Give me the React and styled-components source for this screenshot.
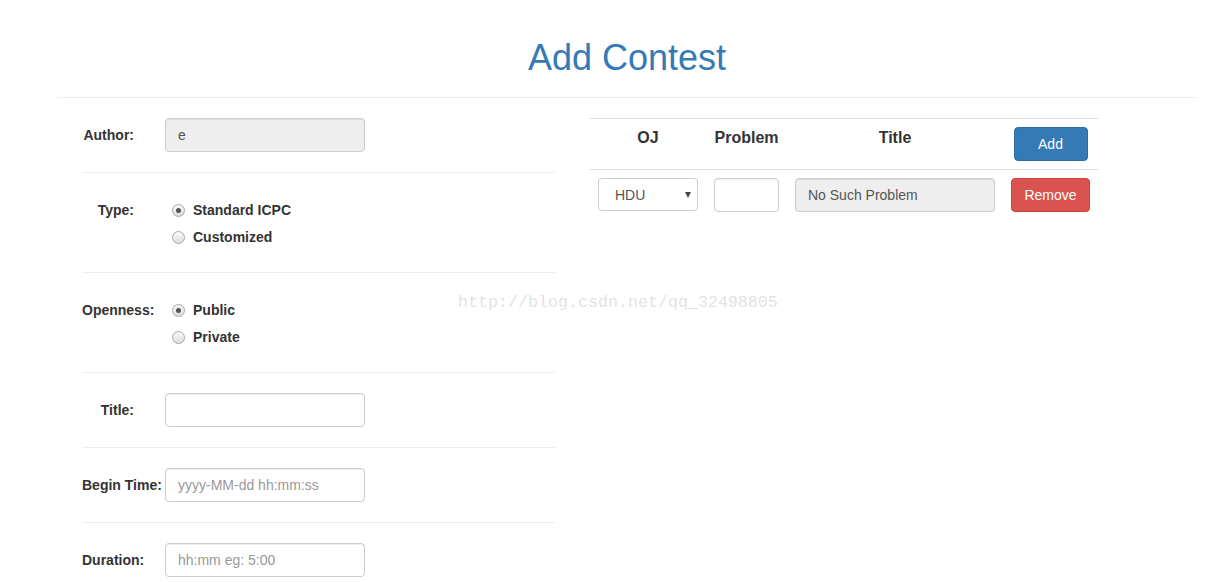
import styled, { createGlobalStyle } from 'styled-components';

const GlobalStyle = createGlobalStyle`
  * {
    box-sizing: border-box;
  }

  body {
    margin: 0;
    background: #fff;
    color: #333;
    font-family: "Liberation Sans", Arial, sans-serif;
    font-size: 14px;
    line-height: 1.42857;
  }
`;

const Page = styled.div`
  position: relative;
  width: 1140px;
  margin-left: 57px;
  padding-top: 38px;
`;

const Heading = styled.h1`
  margin: 0 0 19px;
  font-size: 36px;
  line-height: 40px;
  font-weight: 400;
  color: #337ab7;
  text-align: center;
`;

const Divider = styled.hr`
  margin: 0;
  border: 0;
  border-top: 1px solid #eee;
`;

const Content = styled.div`
  display: flex;
  align-items: flex-start;
`;

const LeftColumn = styled.div`
  width: 473px;
  margin-left: 25px;
`;

const FormRow = styled.div`
  display: flex;
  align-items: flex-start;
  padding: 20px 0;
  border-bottom: ${(p) => (p.$last ? 'none' : '1px solid #eee')};
`;

const Label = styled.label`
  width: 52px;
  flex-shrink: 0;
  margin-right: 31px;
  padding-top: 7px;
  line-height: 20px;
  font-weight: 700;
  text-align: right;
  white-space: nowrap;
`;

const TextInput = styled.input`
  width: 200px;
  height: 34px;
  padding: 6px 12px;
  font-family: inherit;
  font-size: 14px;
  color: #555;
  background: ${(p) => (p.disabled ? '#eee' : '#fff')};
  border: 1px solid #ccc;
  border-radius: 4px;
  box-shadow: inset 0 1px 1px rgba(0, 0, 0, 0.075);
  outline: none;

  &::placeholder {
    color: #999;
  }
`;

const RadioGroup = styled.div`
  padding-bottom: 5px;
`;

const RadioItem = styled.label`
  display: flex;
  align-items: center;
  padding: 7px 0 0 7px;
  line-height: 20px;
  font-weight: 700;
`;

const RadioDot = styled.span`
  width: 13px;
  height: 13px;
  margin-right: 8px;
  border-radius: 50%;
  border: 1px solid #a8a8a8;
  background: linear-gradient(#fafafa, #dcdcdc);
  display: flex;
  align-items: center;
  justify-content: center;

  &::after {
    content: '';
    width: 5px;
    height: 5px;
    border-radius: 50%;
    background: ${(p) => (p.$checked ? '#555' : 'transparent')};
  }
`;

const RightColumn = styled.div`
  margin-left: 35px;
  margin-top: 20px;
  width: 508px;
`;

const Table = styled.table`
  width: 100%;
  border-collapse: collapse;
  border-top: 1px solid #ddd;
`;

const HeadCell = styled.th`
  width: ${(p) => p.$width || 'auto'};
  padding: 9px 8px 8px;
  font-size: 16px;
  line-height: 20px;
  font-weight: 700;
  text-align: center;
  vertical-align: top;
  border-bottom: 1px solid #ddd;
`;

const ButtonHeadCell = styled(HeadCell)`
  padding-top: 8px;
`;

const Cell = styled.td`
  padding: 8px;
  text-align: center;
  vertical-align: top;
`;

const SelectWrap = styled.div`
  position: relative;
  width: 100px;
`;

const Select = styled.select`
  width: 100px;
  height: 33px;
  padding: 0 0 0 16px;
  font-family: inherit;
  font-size: 14px;
  color: #555;
  background: #fff;
  border: 1px solid #ccc;
  border-radius: 4px;
  appearance: none;
  outline: none;
`;

const Caret = styled.span`
  position: absolute;
  right: 7px;
  top: 14px;
  width: 0;
  height: 0;
  border-left: 3px solid transparent;
  border-right: 3px solid transparent;
  border-top: 6px solid #444;
  pointer-events: none;
`;

const Button = styled.button`
  height: 34px;
  width: ${(p) => p.$width};
  font-family: inherit;
  font-size: 14px;
  color: #fff;
  background: ${(p) => (p.$danger ? '#d9534f' : '#337ab7')};
  border: 1px solid ${(p) => (p.$danger ? '#d43f3a' : '#2e6da4')};
  border-radius: 4px;
  cursor: pointer;
`;

const Watermark = styled.div`
  position: absolute;
  left: 401px;
  top: 293px;
  font-family: "Liberation Mono", monospace;
  font-size: 16.67px;
  line-height: 20px;
  color: #e3e3e3;
  pointer-events: none;
`;

const RadioField = ({ options, checked }) => (
  <RadioGroup>
    {options.map((option) => (
      <RadioItem key={option}>
        <RadioDot $checked={option === checked} />
        {option}
      </RadioItem>
    ))}
  </RadioGroup>
);

const App = () => {
  return (
    <>
      <GlobalStyle />
      <Page>
        <Heading>Add Contest</Heading>
        <Divider />
        <Content>
          <LeftColumn>
            <FormRow>
              <Label>Author:</Label>
              <TextInput disabled value="e" readOnly />
            </FormRow>
            <FormRow>
              <Label>Type:</Label>
              <RadioField
                options={['Standard ICPC', 'Customized']}
                checked="Standard ICPC"
              />
            </FormRow>
            <FormRow>
              <Label>Openness:</Label>
              <RadioField options={['Public', 'Private']} checked="Public" />
            </FormRow>
            <FormRow>
              <Label>Title:</Label>
              <TextInput />
            </FormRow>
            <FormRow>
              <Label>Begin Time:</Label>
              <TextInput placeholder="yyyy-MM-dd hh:mm:ss" />
            </FormRow>
            <FormRow $last>
              <Label>Duration:</Label>
              <TextInput placeholder="hh:mm eg: 5:00" />
            </FormRow>
          </LeftColumn>

          <RightColumn>
            <Table>
              <thead>
                <tr>
                  <HeadCell $width="116px">OJ</HeadCell>
                  <HeadCell $width="81px">Problem</HeadCell>
                  <HeadCell $width="216px">Title</HeadCell>
                  <ButtonHeadCell>
                    <Button $width="74px">Add</Button>
                  </ButtonHeadCell>
                </tr>
              </thead>
              <tbody>
                <tr>
                  <Cell>
                    <SelectWrap>
                      <Select defaultValue="HDU">
                        <option>HDU</option>
                        <option>POJ</option>
                      </Select>
                      <Caret />
                    </SelectWrap>
                  </Cell>
                  <Cell>
                    <TextInput style={{ width: 65 }} />
                  </Cell>
                  <Cell>
                    <TextInput disabled value="No Such Problem" readOnly />
                  </Cell>
                  <Cell>
                    <Button $danger $width="79px">
                      Remove
                    </Button>
                  </Cell>
                </tr>
              </tbody>
            </Table>
          </RightColumn>
        </Content>
        <Watermark>http://blog.csdn.net/qq_32498805</Watermark>
      </Page>
    </>
  );
};

export default App;
